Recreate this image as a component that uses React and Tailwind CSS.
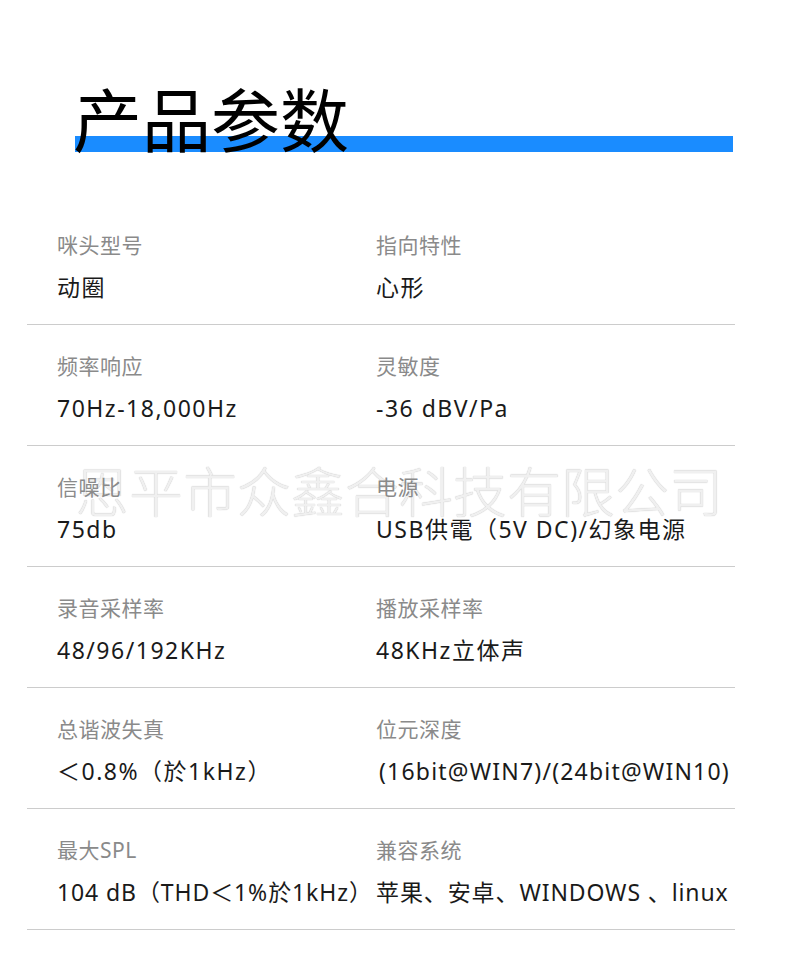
import React from "react";

const specs = [
  [
    { label: "咪头型号", value: "动圈" },
    { label: "指向特性", value: "心形" },
  ],
  [
    { label: "频率响应", value: "70Hz-18,000Hz" },
    { label: "灵敏度", value: "-36 dBV/Pa" },
  ],
  [
    { label: "信噪比", value: "75db" },
    { label: "电源", value: "USB供電（5V DC)/幻象电源" },
  ],
  [
    { label: "录音采样率", value: "48/96/192KHz" },
    { label: "播放采样率", value: "48KHz立体声" },
  ],
  [
    { label: "总谐波失真", value: "＜0.8%（於1kHz）" },
    {
      label: "位元深度",
      value: "(16bit@WIN7)/(24bit@WIN10)",
      track: "tracking-[1.2px] pl-[3px]",
    },
  ],
  [
    { label: "最大SPL", value: "104 dB（THD＜1%於1kHz）", track: "tracking-[0.9px]" },
    { label: "兼容系统", value: "苹果、安卓、WINDOWS 、linux", track: "tracking-[0.9px]" },
  ],
];

const SpecCell = ({ label, value, track }) => (
  <div className="relative z-10 flex flex-col whitespace-nowrap">
    <div className="text-[21px] leading-[30px] tracking-[0.5px] text-[#8a8a8a]">
      {label}
    </div>
    <div
      className={
        "mt-[12px] text-[23px] leading-[30px] text-[#1a1a1a] " +
        (track || "tracking-[1.5px]")
      }
    >
      {value}
    </div>
  </div>
);

const App = () => {
  return (
    <div
      className="w-[790px] h-[964px] bg-white overflow-hidden"
      style={{ fontFamily: '"Noto Sans", "Noto Sans CJK SC", sans-serif' }}
    >
      {/* title */}
      <div className="pt-[83px] pl-[75px]">
        <div
          className="relative z-10 -ml-[2px] text-[69px] leading-none text-black"
          style={{ fontFamily: '"Noto Sans CJK SC", sans-serif' }}
        >
          产品参数
        </div>
        <div className="-mt-[16px] h-[16px] w-[658px] bg-[#1a8cff]" />
      </div>

      {/* spec rows */}
      <div className="mt-[52px] ml-[27px] w-[708px]">
        {specs.map((row, i) => (
          <div
            key={i}
            className="relative grid grid-cols-[319px_1fr] pl-[30px] pt-[26px] pb-[22px] border-b border-[#cccccc]"
          >
            {i === 2 ? (
              <div
                className="pointer-events-none absolute left-[48px] top-[17px] z-0 whitespace-nowrap text-[54px] leading-none font-light text-[#f0f0f0] [text-shadow:0_0_1px_#b0b0b0]"
                style={{ fontFamily: '"Noto Sans CJK SC", sans-serif' }}
              >
                恩平市众鑫合科技有限公司
              </div>
            ) : null}
            {row.map((cell) => (
              <SpecCell key={cell.label} {...cell} />
            ))}
          </div>
        ))}
      </div>
    </div>
  );
};

export default App;
